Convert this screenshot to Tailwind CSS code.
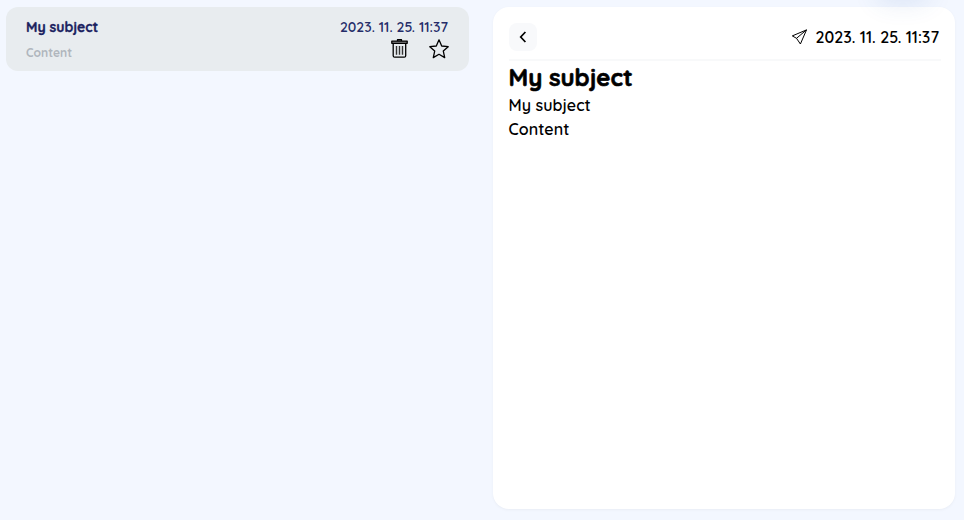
<!DOCTYPE html>
<html lang="en">
<head>
<meta charset="utf-8">
<title>Messages</title>
<script src="https://cdn.jsdelivr.net/npm/@tailwindcss/browser@4"></script>
</head>
<body class="h-[520px] overflow-hidden bg-[#f3f7ff] font-['Quicksand','Lato',sans-serif] text-black">
<main class="relative flex h-full items-start gap-6 pl-[6px] pt-[7px]">
  <article class="flex h-16 w-[463px] justify-between rounded-xl bg-[#e8ecef] pl-5 pr-5 pt-[10px]">
    <div>
      <h2 class="h-5 whitespace-nowrap text-[14px] font-bold leading-5 tracking-[-0.03px] text-[#1b2260] [-webkit-text-stroke:0.3px_#1b2260]"><span>My subject</span></h2>
      <p class="mt-[6px] whitespace-nowrap text-[12px] font-bold leading-5 text-[#b0b6bd]"><span>Content</span></p>
    </div>
    <div class="flex flex-col items-end">
      <time class="-mr-px h-5 whitespace-nowrap pr-[2px] text-[14px] font-semibold leading-5 text-[#252c69]"><span>2023. 11. 25. 11:37</span></time>
      <div class="mt-[1px] flex gap-[18px]">
        <svg class="h-[21px] w-[20px]" viewBox="0 0 20 21" fill="none" stroke="black" stroke-width="1.3" stroke-linejoin="round"><path d="M7.5 2.7V1.7h4v1M1.8 3.1h15.4v2.2H1.8z" fill="#888"/><path d="M3.2 5.5v12.2q0 1.5 1.5 1.5h9.5q1.5 0 1.5-1.5V5.5"/><path d="M6.5 8v8.7M9.5 8v8.7M12.5 8v8.7" stroke-width="1.4" stroke="#333"/></svg>
        <svg class="h-[21px] w-[21px]" viewBox="0 0 21 21" fill="none" stroke="black" stroke-width="1.3" stroke-linejoin="round"><path d="m11 1.8 2.7 6.2 6.5.7-4.9 4.4 1.4 6.5-5.7-3.3-5.7 3.3 1.4-6.5-4.9-4.4 6.5-.7z"/></svg>
      </div>
    </div>
  </article>
  <section class="h-[502px] w-[462px] rounded-2xl bg-white px-4 pt-4 shadow-[0_1px_3px_#0000000b]">
    <header class="flex h-[38px] w-[432px] justify-between border-b-2 border-[#f8f9fa]">
      <button aria-label="Back" class="flex size-7 items-center justify-center rounded-lg bg-[#f8f9fb]">
        <svg class="size-7" viewBox="0 0 28 28" fill="none" stroke="black" stroke-width="1.7"><path d="m16.4 9-4.7 5 4.7 5"/></svg>
      </button>
      <div class="flex h-7 items-center gap-2 pr-[2px]">
        <svg class="size-4" viewBox="0 0 16 16" fill="none" stroke="black" stroke-width="1" stroke-linejoin="round"><path d="M15.5.9 1.3 6.9l4.2 2.4 3.9 5.7zM15.5.9 5.5 9.3"/></svg>
        <time class="whitespace-nowrap text-[16px] font-semibold leading-6"><span>2023. 11. 25. 11:37</span></time>
      </div>
    </header>
    <div class="-ml-[0.5px]">
      <h1 class="whitespace-nowrap text-[24px] font-bold leading-8 [-webkit-text-stroke:0.6px_black]"><span>My subject</span></h1>
      <p class="whitespace-nowrap text-[16px] font-semibold leading-6 tracking-[0.03px]"><span>My subject</span></p>
      <p class="whitespace-nowrap text-[16px] font-semibold leading-6 tracking-[0.05px]"><span>Content</span></p>
    </div>
  </section>
  <div class="pointer-events-none absolute left-[876px] top-[-28px] h-6 w-[54px] rounded-full shadow-[0_6px_26px_#3260b024]"></div>
</main>
</body>
</html>
